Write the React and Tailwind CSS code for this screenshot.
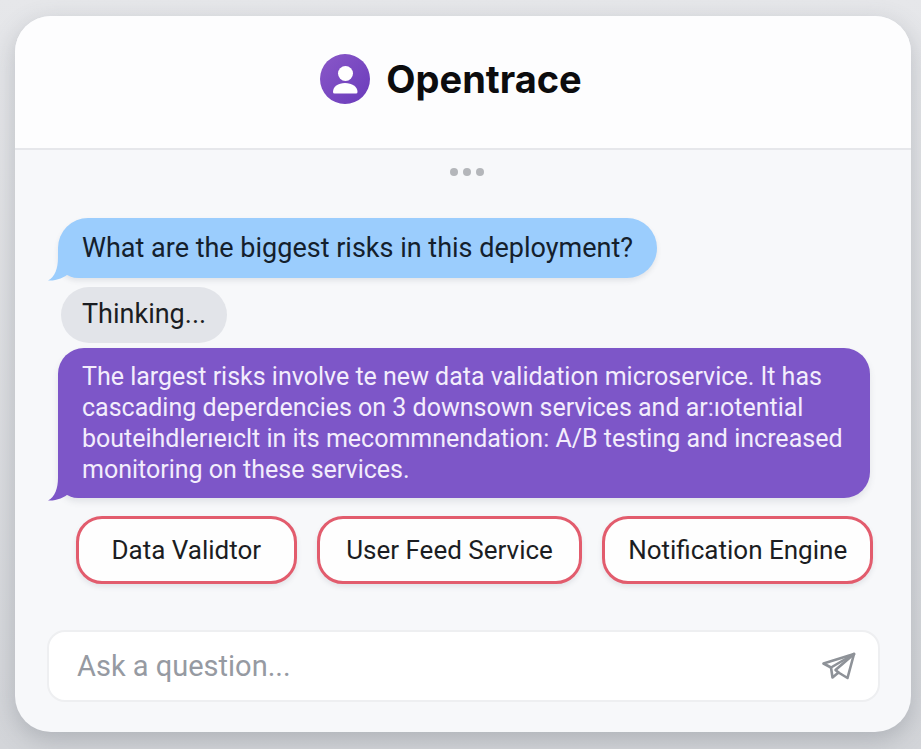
import React, { useState } from "react";
import clsx from "clsx";

const services = ["Data Validtor", "User Feed Service", "Notification Engine"];

function BubbleTail({ className }) {
  return (
    <svg
      className={clsx("absolute -bottom-1 -left-[10px] h-6 w-10", className)}
      viewBox="0 0 40 24"
      fill="currentColor"
      aria-hidden="true"
    >
      <path d="M10 0 C10 10 7 19 0 22.500 C8 23 16 20 22 14.500 C27 18.500 32 20 40 20 V0 Z" />
    </svg>
  );
}

function Logo() {
  return (
    <svg className="size-[50px]" viewBox="0 0 50 50" aria-hidden="true">
      <defs>
        <linearGradient id="logo" x1="0" y1="0" x2="1" y2="1">
          <stop offset="0" stopColor="#8a58c8" />
          <stop offset="1" stopColor="#6a3bbb" />
        </linearGradient>
      </defs>
      <circle cx="25" cy="25" r="25" fill="url(#logo)" />
      <circle cx="25.500" cy="19.500" r="7.500" fill="#fff" />
      <path
        d="M13 38 C13 32.500 18 29 25 29 S37.500 32.500 37.500 38 Q37.500 39.500 36 39.500 H14.500 Q13 39.500 13 38 Z"
        fill="#fff"
      />
    </svg>
  );
}

function SendIcon() {
  return (
    <svg
      className="h-7 w-[34px]"
      viewBox="0 0 34 28"
      fill="none"
      stroke="currentColor"
      strokeWidth="2.600"
      strokeLinejoin="round"
      strokeLinecap="round"
      aria-hidden="true"
    >
      <path d="M32 2 L1.500 11.500 L9 15.500 L10.500 25.500 L16.500 20.500 L25.500 26 Z" />
      <path d="M32 2 L9 15.500" />
      <path d="M32 2 L13.500 18 L16.500 20.500" />
    </svg>
  );
}

export default function App() {
  const [question, setQuestion] = useState("");

  const handleSubmit = (e) => {
    e.preventDefault();
    setQuestion("");
  };

  return (
    <div className="min-h-screen bg-linear-to-b from-[#e6e7ea] to-[#d3d5d9] pt-4 pr-[10px] pb-[18px] pl-[15px] font-[Roboto,sans-serif] text-[27px] text-[#1b1d22]">
      <main className="overflow-hidden rounded-[36px] bg-[#f7f8fa] shadow-[0_8px_24px_rgba(90,95,105,0.3)]">
        <header className="flex items-center justify-center gap-4 border-b-2 border-[#e6e7eb] bg-[#fdfdfe] pt-[38px] pb-11 pr-9 pl-3">
          <Logo />
          <h1 className="font-[Inter,sans-serif] text-[38px] leading-[50px] font-bold text-[#0c0c0e]">
            Opentrace
          </h1>
        </header>

        <div className="flex justify-center gap-[5px] pt-[18px] pb-[42px] pl-2">
          <span className="size-2 rounded-full bg-[#b4b6ba]" />
          <span className="size-2 rounded-full bg-[#b4b6ba]" />
          <span className="size-2 rounded-full bg-[#b4b6ba]" />
        </div>

        {/* Conversation */}
        <section className="flex flex-col items-start pr-[41px] pl-[43px]">
          <div className="relative rounded-[30px] rounded-bl-[20px] bg-[#9bcdfd] px-6 py-[14px] leading-8 text-[#14202c] shadow-[0_3px_5px_rgba(80,90,110,0.12)]">
            <BubbleTail className="text-[#9bcdfd]" />
            <p className="relative">What are the biggest risks in this deployment?</p>
          </div>
          <div className="mt-[9px] ml-[3px] rounded-full bg-[#e2e4e9] px-[21px] pt-[11px] pb-[13px] leading-8">
            Thinking...
          </div>
          <div className="relative mt-[5px] w-full rounded-[26px] rounded-bl-[20px] bg-[#7d56c8] py-[13px] pr-5 pl-6 text-[25px] leading-[31px] text-[#f3edfc] shadow-[0_4px_6px_rgba(80,90,110,0.12)]">
            <BubbleTail className="text-[#7d56c8]" />
            <p className="relative">
              The largest risks involve te new data validation microservice. It has cascading
              deperdencies on 3 downsown services and ar:ıotential bouteihdlerıeıclt in its
              mecommnendation: A/B testing and increased monitoring on these services.
            </p>
          </div>
        </section>

        {/* Affected services */}
        <div className="grid grid-cols-[221fr_266fr_271fr] gap-5 pt-[18px] pr-[38px] pb-[46px] pl-[61px]">
          {services.map((service) => (
            <button
              key={service}
              type="button"
              className="rounded-[26px] border-3 border-[#e25c6d] bg-[#fefefe] py-[15px] text-[26px] leading-8 shadow-[0_3px_5px_rgba(80,90,110,0.12)]"
            >
              {service}
            </button>
          ))}
        </div>

        <form
          onSubmit={handleSubmit}
          className="mr-[31px] mb-[30px] ml-8 flex items-center rounded-[18px] border-2 border-[#eeeff1] bg-white py-[18px] pr-[22px] pl-7"
        >
          <input
            type="text"
            aria-label="Ask a question"
            placeholder="Ask a question..."
            value={question}
            onChange={(e) => setQuestion(e.target.value)}
            className="h-8 min-w-0 flex-1 text-[29px] leading-8 outline-none placeholder:text-[#969aa2]"
          />
          <button type="submit" aria-label="Send" className="text-[#8e9298]">
            <SendIcon />
          </button>
        </form>
      </main>
    </div>
  );
}
